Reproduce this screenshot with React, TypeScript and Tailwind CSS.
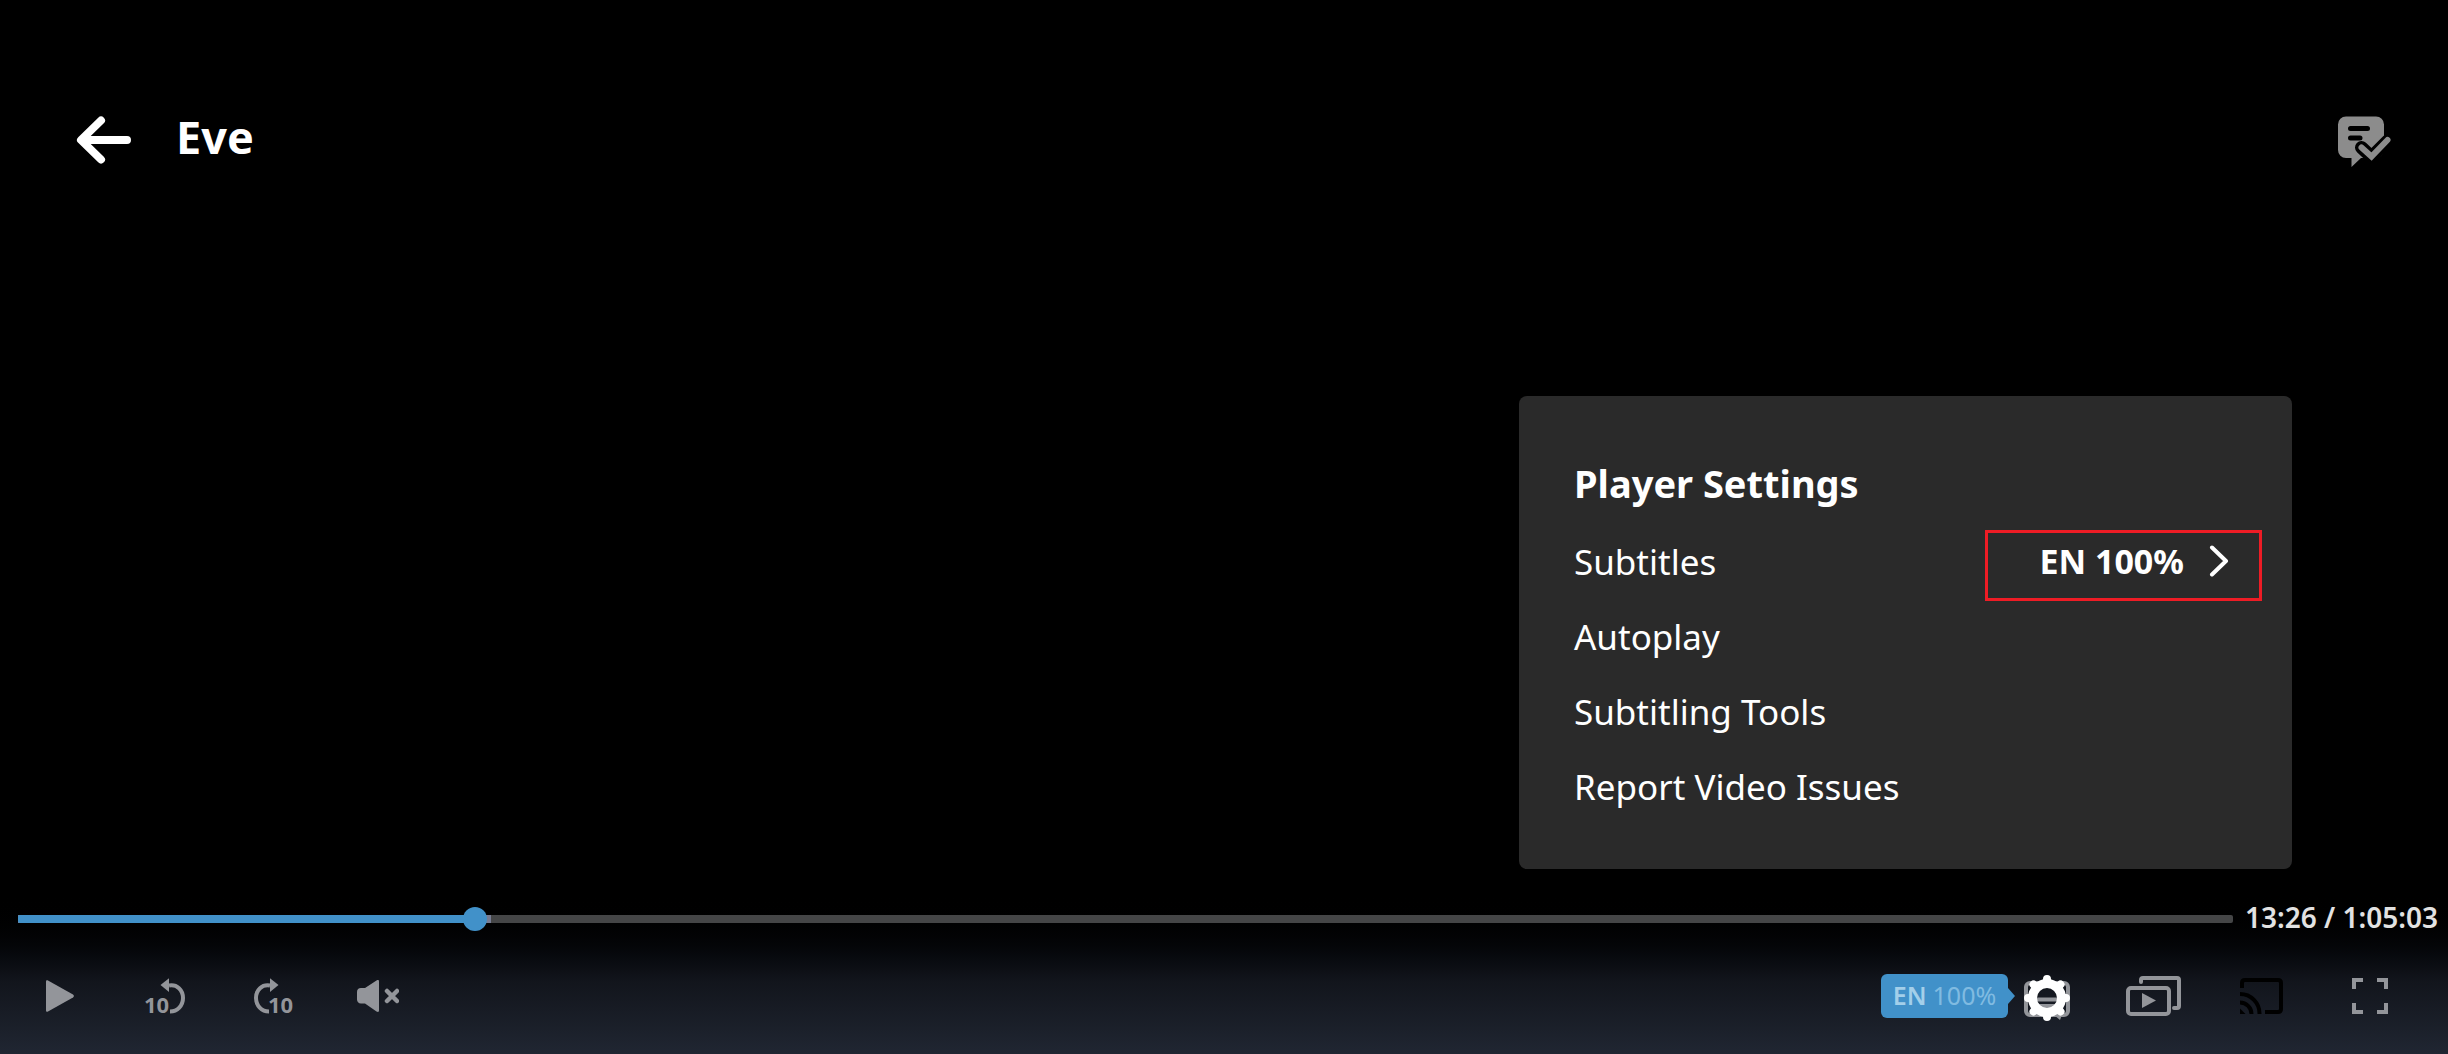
import { useState, type ReactNode } from "react";

const DURATION = 3903;
const BUFFERED = 834;

const menuItems = ["Autoplay", "Subtitling Tools", "Report Video Issues"];

function formatTime(total: number): string {
  const h = Math.floor(total / 3600);
  const m = Math.floor((total % 3600) / 60);
  const s = String(total % 60).padStart(2, "0");
  return h > 0 ? `${h}:${String(m).padStart(2, "0")}:${s}` : `${m}:${s}`;
}

function BackIcon() {
  return (
    <svg width="56" height="50" viewBox="0 0 56 50" fill="none" stroke="currentColor" strokeWidth="8" strokeLinecap="round" strokeLinejoin="round">
      <path d="M25 5.5 5 25l20 19.5M6 25h45" />
    </svg>
  );
}

function ReviewIcon() {
  return (
    <svg width="54" height="52" viewBox="0 0 54 52" fill="none">
      <path d="M8 .5h30a8 8 0 0 1 8 8V34a8 8 0 0 1-8 8H23l-9.500 9V42H8a8 8 0 0 1-8-8V8.500a8 8 0 0 1 8-8Z" fill="#8c8c8c" />
      <path d="M12.500 12.500h17M12.500 22H22" stroke="#000" strokeWidth="5" strokeLinecap="round" />
      <path d="m23.500 31.500 10 9.500L50 24.500" stroke="#000" strokeWidth="13" strokeLinecap="round" />
      <path d="m23.500 31.500 10 9L49.500 24" stroke="#8c8c8c" strokeWidth="6" strokeLinecap="round" />
    </svg>
  );
}

function PlayIcon() {
  return (
    <svg width="28" height="32" viewBox="0 0 28 32" fill="currentColor">
      <path d="M0 1.500C0 .3 1 0 2 .5l25 14c1.200.7 1.200 2.300 0 3l-25 14c-1 .5-2 .2-2-1Z" />
    </svg>
  );
}

function SkipIcon({ back }: { back?: boolean }) {
  return (
    <svg className="overflow-visible" width="44" height="36" viewBox="0 0 44 36" fill="none">
      <g transform={back ? undefined : "translate(45 0) scale(-1 1)"}>
        <path d="M25 7.500C33 6 39 12 39 20c0 7.500-5.500 13.500-13 13.500" stroke="currentColor" strokeWidth="4" />
        <path d="M16.500 7 25 .3V14Z" fill="currentColor" />
      </g>
      <text x={back ? 0 : 18} y="35" fontSize="22" fontWeight="700" fontFamily="'Noto Sans', sans-serif" fill="currentColor">
        10
      </text>
    </svg>
  );
}

function MutedIcon() {
  return (
    <svg width="42" height="32" viewBox="0 0 42 32" fill="none">
      <path d="M4 8h4L19.500.5C21-.3 22 0 22 1.500v29c0 1.500-1 1.800-2.500 1L8 23.500H4c-2.500 0-4-2-4-4V12c0-2.500 1.500-4 4-4Z" fill="currentColor" />
      <path d="m30 11 10 10M40 11 30 21" stroke="currentColor" strokeWidth="4.500" strokeLinecap="round" />
    </svg>
  );
}

function GearIcon() {
  return (
    <svg width="48" height="50" viewBox="-2 -4 48 50" fill="none">
      <rect x="2" y="8" width="42" height="32" rx="4" stroke="#93959a" strokeWidth="4" />
      <path d="M12 24.500h22M12 31h22" stroke="#93959a" strokeWidth="4" />
      <path d="M30 40h8l-2 5Z" fill="#93959a" />
      <circle cx="23" cy="23" r="14.500" stroke="#fff" strokeWidth="9" />
      <path
        d="M23 4v3M23 39v3M4 23h3M39 23h3M9.500 9.500l2 2M34.500 34.500l2 2M9.500 36.500l2-2M34.500 11.500l2-2"
        stroke="#fff"
        strokeWidth="8"
        strokeLinecap="round"
      />
    </svg>
  );
}

function EpisodesIcon() {
  return (
    <svg width="56" height="40" viewBox="0 0 56 40" fill="none" stroke="currentColor" strokeWidth="4">
      <rect x="2" y="12" width="41" height="26" rx="3" />
      <path d="M15 6V4q0-2 2-2h34q2 0 2 2v26q0 2-2 2h-3" strokeLinecap="round" />
      <path d="M16 17v15l14-7.500Z" fill="currentColor" stroke="none" />
    </svg>
  );
}

function CastIcon() {
  return (
    <svg width="44" height="36" viewBox="0 0 44 36" fill="none" stroke="#000" strokeWidth="4">
      <path d="M2 10V5q0-3 3-3h33q3 0 3 3v26q0 3-3 3H25" />
      <path d="M0 16a19.500 19.500 0 0 1 19.500 20M0 24.500a11.500 11.500 0 0 1 11.500 11.500" />
      <path d="M0 30.500 5.500 36H0Z" fill="#000" stroke="none" />
    </svg>
  );
}

function FullscreenIcon() {
  return (
    <svg width="36" height="36" viewBox="0 0 36 36" fill="none" stroke="currentColor" strokeWidth="4">
      <path d="M2 11V2h9M25 2h9v9M34 25v9h-9M11 34H2v-9" />
    </svg>
  );
}

function ControlButton({ label, wide, children }: { label: string; wide?: boolean; children: ReactNode }) {
  return (
    <button aria-label={label} className={`flex h-12 items-center justify-center text-[#93959a] ${wide ? "w-[108px]" : "w-[106px]"}`}>
      {children}
    </button>
  );
}

export default function App() {
  const [time, setTime] = useState(806);

  return (
    <div className="flex min-h-screen flex-col bg-black font-['Noto_Sans',sans-serif] text-white">
      <header className="flex items-center justify-between pt-[108px] pr-14 pl-[76px]">
        <div className="flex items-center gap-11">
          <button aria-label="Back">
            <BackIcon />
          </button>
          <h1 className="pb-1.5 text-[45px] leading-[58px] font-bold">Eve</h1>
        </div>
        <button aria-label="Review subtitles" className="pt-1">
          <ReviewIcon />
        </button>
      </header>

      <main className="flex flex-1 items-end justify-end pr-[156px] pb-[23px]">
        <section className="w-[773px] rounded-lg bg-[#2a2a2a] pt-[60px] pr-[30px] pb-[45px] pl-[55px]">
          <h2 className="text-[38px] leading-[54px] font-bold">Player Settings</h2>
          <ul className="mt-3.5 text-[35px] leading-[75px]">
            <li className="flex h-[75px] items-start justify-between">
              <span>Subtitles</span>
              <button className="mt-1.5 flex h-[71px] items-center gap-[25px] border-[3px] border-[#ee1c25] pr-[30px] pb-[9px] pl-[51px] text-[34px] font-bold">
                EN 100%
                <svg width="20" height="32" viewBox="0 0 20 32" fill="none" stroke="currentColor" strokeWidth="4" strokeLinecap="round" strokeLinejoin="round">
                  <path d="m3 2.500 14 13.500L3 29.500" />
                </svg>
              </button>
            </li>
            {menuItems.map((item) => (
              <li key={item}>
                <button className="block">{item}</button>
              </li>
            ))}
          </ul>
        </section>
      </main>

      <footer className="bg-linear-to-b from-black via-[#12151c] via-55% to-[#202632] pb-[34px]">
        <div className="flex items-center gap-3 pt-2 pr-[10px] pl-[18px]">
          <div className="relative h-2 flex-1 rounded-xs bg-[#454647]">
            <div className="absolute inset-y-0 left-0 bg-[#777c93]" style={{ width: `${(BUFFERED / DURATION) * 100}%` }} />
            <div className="absolute inset-y-0 left-0 rounded-l-xs bg-[#4191c9]" style={{ width: `${(time / DURATION) * 100}%` }} />
            <input
              type="range"
              aria-label="Seek"
              min={0}
              max={DURATION}
              value={time}
              onChange={(e) => setTime(Number(e.target.value))}
              className="absolute -top-2 -left-3 h-6 w-[calc(100%+24px)] appearance-none bg-transparent [&::-webkit-slider-thumb]:size-6 [&::-webkit-slider-thumb]:appearance-none [&::-webkit-slider-thumb]:rounded-full [&::-webkit-slider-thumb]:bg-[#4191c9]"
            />
          </div>
          <span className="pb-1 text-[28px] leading-[34px] font-semibold text-[#e2e2e2]">
            {formatTime(time)} / {formatTime(DURATION)}
          </span>
        </div>

        <div className="mt-[34px] flex items-center justify-between pr-6 pl-[7px]">
          <div className="flex">
            <ControlButton label="Play">
              <PlayIcon />
            </ControlButton>
            <ControlButton label="Back 10 seconds">
              <SkipIcon back />
            </ControlButton>
            <ControlButton label="Forward 10 seconds">
              <SkipIcon />
            </ControlButton>
            <ControlButton label="Unmute">
              <MutedIcon />
            </ControlButton>
          </div>
          <div className="flex">
            <div className="relative">
              <div className="absolute top-0.5 right-[92px] flex h-11 w-[127px] items-center justify-center gap-1.5 rounded-md bg-[#4191c9] text-[25px] text-[#80bbe1]">
                <span className="font-semibold text-[#a3cfea]">EN</span>
                <span>100%</span>
                <svg className="absolute top-3.5 left-full" width="7" height="16" viewBox="0 0 7 16" fill="#4191c9">
                  <path d="M0 0 7 8 0 16Z" />
                </svg>
              </div>
              <ControlButton label="Settings" wide>
                <GearIcon />
              </ControlButton>
            </div>
            <ControlButton label="Episodes" wide>
              <EpisodesIcon />
            </ControlButton>
            <ControlButton label="Cast" wide>
              <CastIcon />
            </ControlButton>
            <ControlButton label="Fullscreen" wide>
              <FullscreenIcon />
            </ControlButton>
          </div>
        </div>
      </footer>
    </div>
  );
}
